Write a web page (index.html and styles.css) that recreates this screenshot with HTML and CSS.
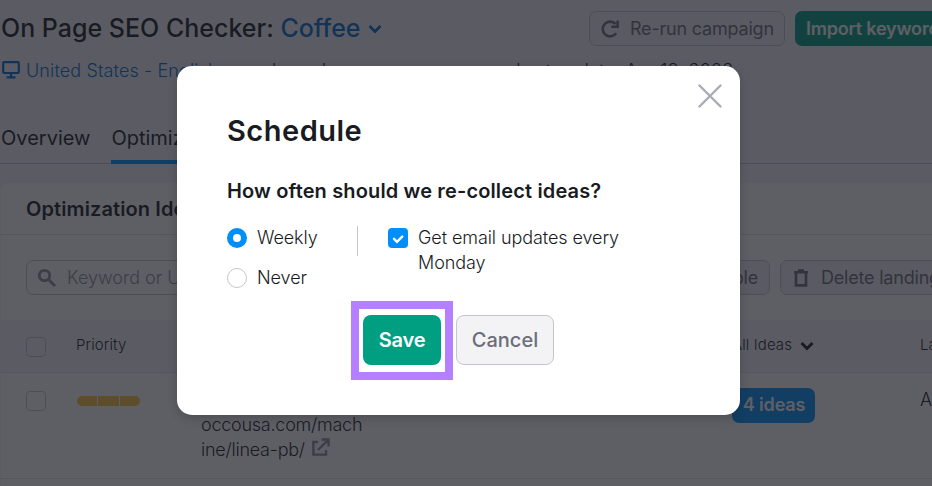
FILE: index.html
```html
<!DOCTYPE html>
<html lang="en">
<head>
  <meta charset="UTF-8" />
  <meta name="viewport" content="width=device-width, initial-scale=1.0"/>
  <title>On Page SEO Checker</title>
  <link rel="stylesheet" href="styles.css">
</head>

<body>
  <header class="header">
    <div class="top">
      <h1 class="title">On Page SEO Checker: <a class="campaign">Coffee</a>
        <svg class="title-arrow" width="14" height="10" viewBox="0 0 14 10"><path d="M1.5 2L7 7.5 12.5 2"/></svg>
      </h1>
      <div class="top-actions">
        <button class="btn btn-rerun">
          <svg width="20" height="20" viewBox="0 0 20 20"><path d="M16.2 14.2A7.4 7.4 0 1 1 15.6 5"/><path d="M17.6 1.5v6.3h-6.3"/></svg>
          Re-run campaign
        </button>
        <button class="btn btn-import">Import keywords</button>
      </div>
    </div>

    <div class="meta">
      <svg class="device" width="18" height="18" viewBox="0 0 18 18"><rect x="1.2" y="1.2" width="15.6" height="10.8" rx="1"/><path d="M9 12v4M4.5 16.4h9"/></svg>
      <a class="location">United States - English</a>
      <span class="domain">bound</span>
      <span class="updated">Last update: Apr 18, 2023</span>
    </div>

    <nav class="tabs">
      <a class="tab">Overview</a>
      <a class="tab active">Optimization Ideas</a>
    </nav>
  </header>

  <main class="card">
    <h2 class="card-title">Optimization Ideas</h2>

    <div class="toolbar">
      <div class="search">
        <svg width="20" height="20" viewBox="0 0 20 20"><circle cx="7.5" cy="7.5" r="5.2"/><path d="M11.5 11.5L18 18"/></svg>
        Keyword or URL
      </div>
      <button class="btn btn-available">Available</button>
      <button class="btn btn-delete">
        <svg width="16" height="18" viewBox="0 0 16 18"><path d="M1 3.2h14M5 1.6h6M3 3v13.4h10V3"/></svg>
        Delete landing page
      </button>
    </div>

    <div class="row thead">
      <span class="box"></span>
      <span>Priority</span>
      <span></span>
      <span class="all-ideas">All Ideas
        <svg width="14" height="10" viewBox="0 0 14 10"><path d="M1.5 2L7 7.5 12.5 2"/></svg>
      </span>
      <span>Last</span>
    </div>

    <div class="row item">
      <span class="box"></span>
      <span class="priority"><i></i><i></i><i></i></span>
      <span class="url">lamarz<br>occousa.com/mach<br>ine/linea-pb/
        <svg width="18" height="18" viewBox="0 0 18 18"><path d="M6 4H1.4v12.6H14V12M6 12l9-9M9.6 1.5h6.9v6.9"/></svg>
      </span>
      <span class="ideas">4 ideas</span>
      <span class="date">Apr</span>
    </div>
  </main>

  <div class="overlay">
    <div class="modal">
      <button class="close" aria-label="Close">
        <svg width="24" height="24" viewBox="0 0 24 24"><path d="M1.5 1.5l21 21M22.5 1.5l-21 21"/></svg>
      </button>
      <h2 class="modal-title">Schedule</h2>
      <h3 class="question">How often should we re-collect ideas?</h3>

      <div class="options">
        <div class="radios">
          <label class="option"><span class="radio checked"></span>Weekly</label>
          <label class="option"><span class="radio"></span>Never</label>
        </div>
        <label class="option email">
          <span class="check"><svg width="20" height="20" viewBox="0 0 20 20"><path d="M6 10.8l3 3 5.2-5.2"/></svg></span>
          Get email updates every<br>Monday
        </label>
      </div>

      <div class="buttons">
        <button class="save">Save</button>
        <button class="cancel">Cancel</button>
      </div>
    </div>
  </div>
</body>
</html>
```
FILE: styles.css
```css
:root {
  --bg: #f4f5f9;
  --txt: #191b23;
  --muted: #6c6e79;
  --icon: #8a8e9b;
  --line: #c4c7cf;
  --link: #006dca;
  --blue: #008ff8;
  --green: #009f81;
}

* { box-sizing: border-box; }

body {
  margin: 0;
  height: 486px;
  overflow: hidden;
  background: var(--bg);
  color: var(--txt);
  font-family: Inter, "Liberation Sans", sans-serif;
  font-size: 18px;
  font-weight: 300;
}

h1, h2, h3 { margin: 0; }

svg {
  flex: none;
  fill: none;
  stroke: currentColor;
}

button {
  font-family: inherit;
  padding: 0;
}

/* header */
.header {
  height: 164px;
  border-bottom: 1px solid var(--line);
}

.top {
  display: flex;
  justify-content: space-between;
  padding: 11px 0 0 1px;
  height: 46px;
}

.title {
  font-size: 25px;
  font-weight: 500;
  line-height: 35px;
  white-space: nowrap;
}

.campaign { color: var(--link); }

.title-arrow {
  margin-left: 1px;
  color: var(--link);
  stroke-width: 2.8;
  vertical-align: 3px;
}

.top-actions {
  display: flex;
  gap: 10px;
  width: 343px;
}

.btn {
  display: flex;
  align-items: center;
  flex: none;
  height: 35px;
  border: 1px solid var(--line);
  border-radius: 7px;
  background: #f0f0f4;
  color: var(--muted);
  font-size: 18px;
  font-weight: 400;
  letter-spacing: -0.2px;
  white-space: nowrap;
}

.btn-rerun {
  width: 196px;
  padding-left: 10px;
  gap: 10px;
}

.btn svg { stroke-width: 2.6; }

.btn-import {
  width: 180px;
  padding-left: 11px;
  border: none;
  background: var(--green);
  color: #fff;
  font-weight: 600;
  letter-spacing: -0.2px;
}

.meta {
  display: flex;
  align-items: center;
  height: 24px;
  margin-top: 12px;
  padding-left: 2px;
  letter-spacing: 0.12px;
  white-space: nowrap;
}

.device {
  color: var(--link);
  stroke-width: 2.2;
}

.location {
  width: 246px;
  padding-left: 6px;
  color: var(--link);
}

.domain { width: 250px; padding-left: 6px; }

.tabs {
  display: flex;
  gap: 21px;
  margin-top: 31px;
  padding-left: 1px;
  font-size: 20px;
  font-weight: 400;
}

.tab {
  height: 51px;
  line-height: 50px;
}

.tab.active { border-bottom: 4px solid var(--blue); }

/* ideas table */
.card {
  margin: 19px 0 0 1px;
  height: 320px;
  width: 960px;
  background: #fff;
  border-radius: 8px;
}

.card-title {
  height: 52px;
  padding-left: 25px;
  border-bottom: 1px solid #e0e1e9;
  font-size: 20px;
  font-weight: 600;
  letter-spacing: 0.1px;
  line-height: 52px;
}

.toolbar {
  display: flex;
  height: 85px;
  padding: 25px 0 0 25px;
}

.search {
  display: flex;
  flex: none;
  align-items: center;
  gap: 10px;
  width: 530px;
  height: 35px;
  padding-left: 10px;
  border: 1px solid var(--line);
  border-radius: 7px;
  color: var(--icon);
}

.search svg { stroke-width: 2.8; }

.btn-available {
  width: 110px;
  margin: 0 10px 0 104px;
  padding-right: 11px;
  justify-content: flex-end;
}

.btn-delete {
  width: 220px;
  padding-left: 12px;
  gap: 12px;
}

.row {
  display: grid;
  grid-template-columns: 50px 125px 531px 188px 66px;
  padding-left: 25px;
  border-bottom: 1px solid #e0e1e9;
}

.thead {
  height: 53px;
  align-items: center;
  background: var(--bg);
  font-size: 15px;
  letter-spacing: 0.1px;
  padding-bottom: 3px;
}

.all-ideas svg {
  margin-left: 4px;
  stroke-width: 3;
  vertical-align: -1px;
}

.box {
  width: 20px;
  height: 20px;
  border: 1px solid var(--line);
  border-radius: 4px;
}

.thead .box { margin-top: 4px; }

.item {
  height: 106px;
  padding-top: 15px;
}

.item .box { margin-top: 3px; }

.priority {
  display: flex;
  gap: 1px;
  margin: 8px 0 0 1px;
}

.priority i {
  width: 20.3px;
  height: 10px;
  background: #fdc23c;
}

.priority i:first-child { border-radius: 5px 0 0 5px; }
.priority i:last-child { border-radius: 0 5px 5px 0; }

.url {
  margin-top: -1px;
  line-height: 25px;
  letter-spacing: -0.25px;
}

.url svg {
  margin-left: 2px;
  color: var(--icon);
  stroke-width: 2.4;
  vertical-align: 0;
}

.ideas {
  width: 83px;
  height: 35px;
  padding-left: 1px;
  border-radius: 7px;
  background: var(--blue);
  color: #fff;
  font-weight: 600;
  letter-spacing: -0.15px;
  line-height: 34px;
  text-align: center;
}

.date { line-height: 24px; }

/* schedule dialog */
.overlay {
  position: absolute;
  inset: 0;
  padding: 66px 0 0 177px;
  background: rgba(25, 27, 35, 0.7);
}

.modal {
  position: relative;
  width: 563px;
  height: 349px;
  padding: 48px 50px 0;
  background: #fff;
  border-radius: 15px;
  box-shadow: 0 3px 10px rgba(25, 27, 35, 0.25);
}

.close {
  position: absolute;
  top: 18px;
  right: 18px;
  height: 24px;
  border: none;
  background: none;
  color: #a9abb6;
}

.close svg {
  stroke-width: 2.4;
  stroke-linecap: round;
}

.modal-title {
  font-size: 29px;
  font-weight: 600;
  letter-spacing: 0.5px;
  line-height: 34px;
}

.question {
  margin-top: 30px;
  font-size: 20px;
  font-weight: 600;
  letter-spacing: 0.14px;
  line-height: 26px;
}

.options {
  display: flex;
  margin-top: 21px;
  letter-spacing: -0.08px;
  line-height: 25px;
}

.radios {
  display: flex;
  flex-direction: column;
  gap: 15px;
  width: 131px;
}

.option {
  display: flex;
  gap: 10px;
}

.radio {
  width: 20px;
  height: 20px;
  margin-top: 3px;
  border: 1px solid var(--line);
  border-radius: 50%;
}

.radio.checked { border: 6px solid var(--blue); }

.email {
  display: block;
  position: relative;
  padding-left: 60px;
}

.email::before {
  content: "";
  position: absolute;
  left: -1px;
  top: 1px;
  height: 30px;
  border-left: 1px solid var(--line);
}

.check {
  position: absolute;
  left: 30px;
  top: 3px;
  width: 20px;
  height: 20px;
  border-radius: 4px;
  background: var(--blue);
  color: #fff;
}

.check svg {
  display: block;
  stroke-width: 2.4;
  stroke-linecap: round;
}

.buttons {
  display: flex;
  gap: 15px;
  margin: 25px 0 0 136px;
}

.save, .cancel {
  position: relative;
  height: 50px;
  border-radius: 8px;
  font-size: 20px;
  font-weight: 500;
}

.save {
  width: 78px;
  border: none;
  background: var(--green);
  color: #fff;
  font-weight: 600;
  letter-spacing: -0.2px;
}

.save::after {
  content: "";
  position: absolute;
  inset: -14px -12px -15px;
  border: 8px solid #b580ff;
}

.cancel {
  width: 98px;
  border: 1px solid var(--line);
  background: #f3f3f5;
  color: var(--muted);
}
```
